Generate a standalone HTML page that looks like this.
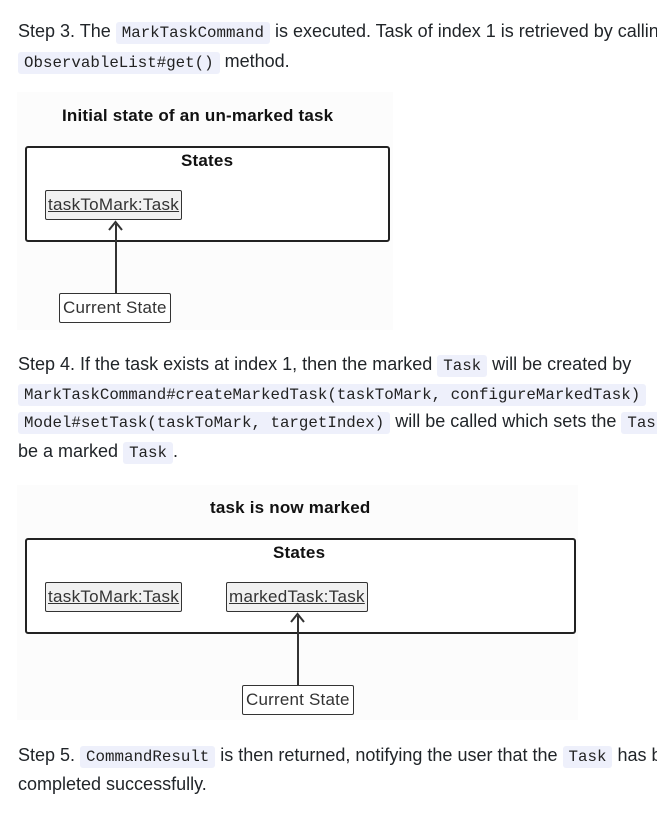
<!DOCTYPE html>
<html><head><style>
body{margin:0;width:657px;height:815px;overflow:hidden;background:#fff;font-family:"Liberation Sans",sans-serif;color:#212529;position:relative}
.l{position:absolute;left:18px;white-space:nowrap;font-size:18px;line-height:24px;letter-spacing:0}
code{font-family:"Liberation Mono",monospace;font-size:15.8px;background:#eef0fb;border-radius:3px;padding:2px 6px;letter-spacing:0;color:#222}
.d{position:absolute;background:#fcfcfc}
.box{position:absolute;border:2px solid #222;border-radius:3px;background:#fff}
.obj{position:absolute;border:1.5px solid #333;border-radius:2px;background:#f1f1f1;font-size:17px;letter-spacing:0.3px;text-decoration:underline;padding:0 2px;line-height:28px;color:#333}
.cs{position:absolute;border:1.5px solid #333;border-radius:2px;background:#fff;font-size:17px;letter-spacing:0.2px;padding:0 3px;line-height:28px;color:#333}
.t{position:absolute;font-weight:bold;font-size:17px;letter-spacing:0.2px;color:#111}
.ln{position:absolute;width:1.5px;background:#333}
</style></head><body>
<div class="l" style="top:19px">Step 3. The <code>MarkTaskCommand</code> is executed. Task of index 1 is retrieved by calling</div>
<div class="l" style="top:49px"><code>ObservableList#get()</code> method.</div>

<div class="d" style="left:17px;top:92px;width:376px;height:238px"></div>
<div class="t" style="left:62px;top:106px">Initial state of an un-marked task</div>
<div class="box" style="left:25px;top:146px;width:361px;height:92px"></div>
<div class="t" style="left:181px;top:151px">States</div>
<div class="obj" style="left:45px;top:190px">taskToMark:Task</div>
<div class="ln" style="left:115px;top:224px;height:70px"></div>
<svg style="position:absolute;left:107px;top:220px" width="17" height="12"><path d="M2 10 L8.5 2 L15 10" fill="none" stroke="#333" stroke-width="2"/></svg>
<div class="cs" style="left:59px;top:293px">Current State</div>

<div class="l" style="top:352px">Step 4. If the task exists at index 1, then the marked <code>Task</code> will be created by</div>
<div class="l" style="top:381px"><code>MarkTaskCommand#createMarkedTask(taskToMark, configureMarkedTask)</code></div>
<div class="l" style="top:409px"><code>Model#setTask(taskToMark, targetIndex)</code> will be called which sets the <code>Task</code></div>
<div class="l" style="top:439px">be a marked <code>Task</code>.</div>

<div class="d" style="left:17px;top:485px;width:561px;height:235px"></div>
<div class="t" style="left:210px;top:498px">task is now marked</div>
<div class="box" style="left:25px;top:538px;width:547px;height:92px"></div>
<div class="t" style="left:273px;top:543px">States</div>
<div class="obj" style="left:45px;top:582px">taskToMark:Task</div>
<div class="obj" style="left:226px;top:582px">markedTask:Task</div>
<div class="ln" style="left:297px;top:616px;height:70px"></div>
<svg style="position:absolute;left:289px;top:612px" width="17" height="12"><path d="M2 10 L8.5 2 L15 10" fill="none" stroke="#333" stroke-width="2"/></svg>
<div class="cs" style="left:242px;top:685px">Current State</div>

<div class="l" style="top:743px">Step 5. <code>CommandResult</code> is then returned, notifying the user that the <code>Task</code> has been</div>
<div class="l" style="top:772px">completed successfully.</div>
</body></html>
